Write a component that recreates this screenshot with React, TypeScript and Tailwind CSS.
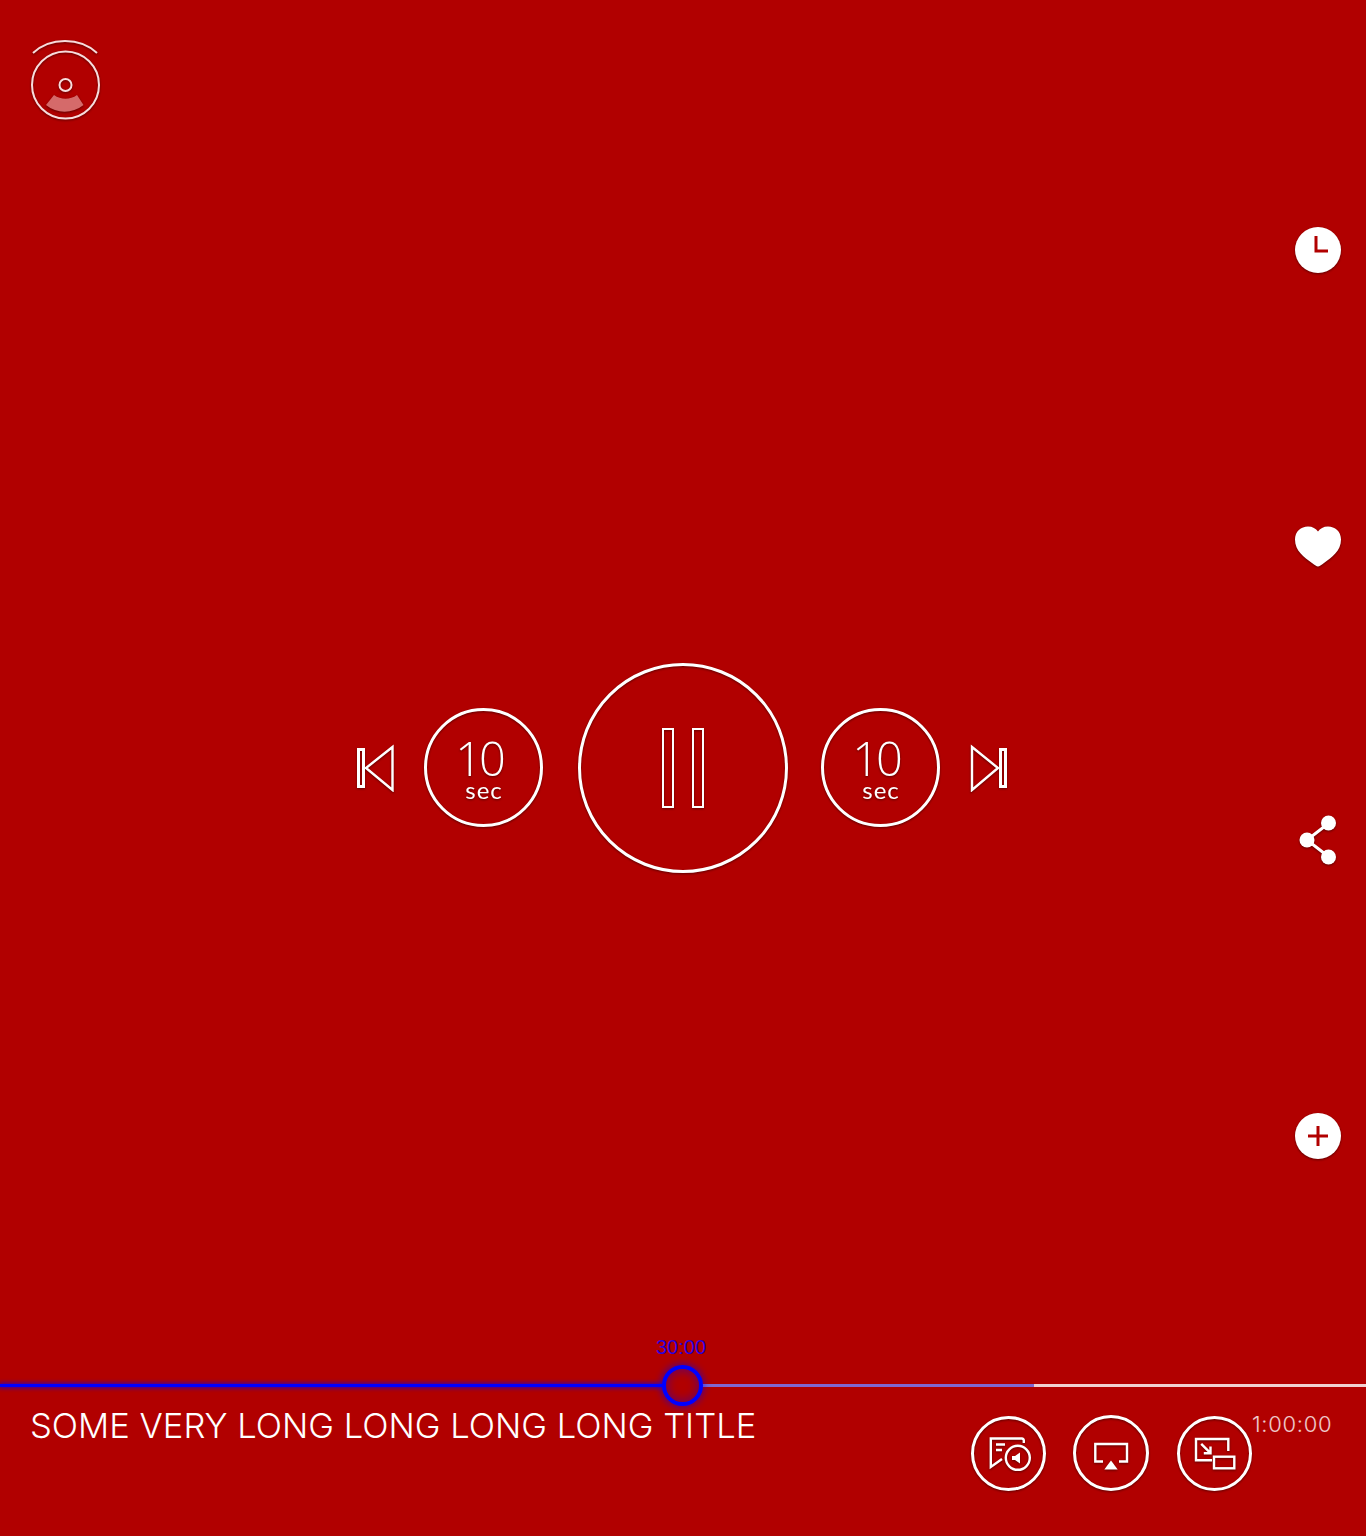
import React from 'react';

const shadow = 'drop-shadow-[0_1px_1px_rgba(0,0,0,0.45)]';

const SideButton: React.FC<{ children: React.ReactNode; className?: string }> = ({ children, className = '' }) => (
  <button className={`w-[46px] h-[46px] flex items-center justify-center ${shadow} ${className}`}>{children}</button>
);

const SkipBack = () => (
  <svg width="38" height="48" viewBox="0 0 38 48" fill="none" stroke="white" className={shadow}>
    <rect x="2.5" y="5.5" width="5" height="37" strokeWidth="3" />
    <path d="M36.5 3 L10 24 L36.5 46 Z" strokeWidth="2.4" />
  </svg>
);

const SkipForward = () => (
  <svg width="38" height="48" viewBox="0 0 38 48" fill="none" stroke="white" className={shadow}>
    <rect x="30.5" y="5.5" width="5" height="37" strokeWidth="3" />
    <path d="M2 3 L28 24 L2 46 Z" strokeWidth="2.4" />
  </svg>
);

const TenSec = () => (
  <button className={`w-[119px] h-[119px] -mt-[1px] rounded-full border-[3px] border-white text-white flex flex-col items-center ${shadow}`}>
    <span className="text-[47px] leading-[36px] font-light mt-[29px] -ml-[9px] tracking-[-3px]" style={{ fontFamily: '"Open Sans", sans-serif' }}>10</span>
    <span className="text-[24px] leading-[20px] mt-[4px] ml-[1px] tracking-[1px]" style={{ fontFamily: 'Lato, sans-serif' }}>sec</span>
  </button>
);

const BottomButton: React.FC<{ children: React.ReactNode; className?: string }> = ({ children, className = '' }) => (
  <button className={`rounded-full border-[3px] border-white flex items-center justify-center ${shadow} ${className}`}>{children}</button>
);

export default function App() {
  return (
    <div className="h-[1536px] bg-[#b10000] flex flex-col overflow-hidden" style={{ fontFamily: '"Liberation Sans", sans-serif' }}>
      <div className="h-[1384px] grid grid-cols-[1fr_auto_1fr]">
        <div className="pt-[39px] pl-[30px]">
          <svg width="72" height="82" viewBox="0 0 72 82" fill="none" className={shadow}>
            <path d="M3 14 C20 -2 50 -2 67 14" stroke="#f7dcdc" strokeWidth="2" />
            <circle cx="35.5" cy="46" r="33.5" stroke="#f7dcdc" strokeWidth="2" />
            <circle cx="35.5" cy="46" r="6" stroke="#f7dcdc" strokeWidth="2" />
            <path d="M16 66 L24 56 C31 61 40 61 47 56 L53.5 66 C42 75 27 75 16 66 Z" fill="#d56a6a" />
          </svg>
        </div>

        <div className="pt-[663px] pr-[2px] flex items-center h-[873px]">
          <div className="flex items-center gap-[30px] mr-[35px]">
            <SkipBack />
            <TenSec />
          </div>
          <button className={`w-[210px] h-[210px] rounded-full border-[3px] border-white flex items-center justify-center gap-[18px] ${shadow}`}>
            <span className="w-[12px] h-[80px] border-2 border-white" />
            <span className="w-[12px] h-[80px] border-2 border-white" />
          </button>
          <div className="flex items-center gap-[30px] ml-[33px]">
            <TenSec />
            <SkipForward />
          </div>
        </div>

        <div className="flex flex-col items-end pt-[227px] pr-[25px] gap-[249px]">
          <SideButton>
            <svg width="46" height="46" viewBox="0 0 46 46">
              <circle cx="23" cy="23" r="23" fill="white" />
              <path d="M21 9 V24 H33" fill="none" stroke="#b10000" strokeWidth="3" />
            </svg>
          </SideButton>
          <SideButton className="pt-[2px]">
            <svg width="46" height="41" viewBox="0 0 46 41">
              <path d="M23 40.5 C21.5 40.5 20 39 17 37 C9 31 0 25 0 13.5 C0 5.5 6 0.5 13 0.5 C17.5 0.5 21 2.5 23 5.5 C25 2.5 28.5 0.5 33 0.5 C40 0.5 46 5.5 46 13.5 C46 25 37 31 29 37 C26 39 24.5 40.5 23 40.5 Z" fill="white" />
            </svg>
          </SideButton>
          <SideButton>
            <svg width="40" height="50" viewBox="0 0 40 50">
              <path d="M31 8 L9 25 L31 42" fill="none" stroke="white" strokeWidth="3" />
              <circle cx="30.5" cy="8" r="7.5" fill="white" />
              <circle cx="9" cy="25" r="7.5" fill="white" />
              <circle cx="30.5" cy="42" r="7.5" fill="white" />
            </svg>
          </SideButton>
          <SideButton className="mt-[1px]">
            <svg width="46" height="46" viewBox="0 0 46 46">
              <circle cx="23" cy="23" r="23" fill="white" />
              <path d="M13 23 H33 M23 13 V33" fill="none" stroke="#b10000" strokeWidth="3" />
            </svg>
          </SideButton>
        </div>
      </div>

      {/* progress */}
      <div className="relative h-[3px] flex-none flex">
        <div className="w-[682px] bg-[#0000ff] shadow-[0_0_4px_1px_rgba(0,0,255,0.7)]" />
        <div className="w-[352px] bg-[#8068d0]" />
        <div className="flex-1 bg-[#f0d0d0]" />
        <div className="absolute left-[662px] top-[-19px] w-[41px] h-[41px] rounded-full bg-[#b10000] border-[4px] border-[#0000ff] shadow-[0_0_6px_2px_rgba(0,0,255,0.45),inset_0_0_8px_2px_rgba(0,0,255,0.35)]" />
        <div className="absolute left-[631px] top-[-49px] w-[100px] text-center text-[20px] leading-[24px] text-[#2a00dd]">30:00</div>
      </div>

      <div className="flex-1 flex items-start pl-[30px]">
        <div className="flex-1 pt-[16px] text-white text-[34.6px] leading-[44px]" style={{ fontFamily: 'Inter, sans-serif', fontWeight: 300 }}>
          SOME VERY LONG LONG LONG LONG TITLE
        </div>
        <div className="flex items-center pt-[28px]">
          <BottomButton className="w-[75px] h-[75px] mr-[27px]">
            <svg width="44" height="38" viewBox="0 0 44 38" fill="none" stroke="white" strokeWidth="2.4">
              <path d="M36.8 9 V6.5 Q36.8 4.5 34.8 4.5 H3.8 V33 L15 25" />
              <path d="M9 10.5 H18 M9 16 H15" />
              <circle cx="30.8" cy="23.8" r="12" />
              <path d="M33 18.5 V29.5 L28 26 H25 V22 H28 Z" fill="white" stroke="none" />
            </svg>
          </BottomButton>
          <BottomButton className="w-[76px] h-[76px] mr-[28px]">
            <svg width="38" height="34" viewBox="0 0 38 34" fill="none" stroke="white" strokeWidth="2.4">
              <path d="M11 25.5 H3.3 V8 H35 V25.5 H27" />
              <path d="M19 24.5 L25.7 33.5 H12.3 Z" fill="white" stroke="none" />
            </svg>
          </BottomButton>
          <BottomButton className="w-[75px] h-[75px]">
            <svg width="44" height="36" viewBox="0 0 44 36" fill="none" stroke="white" strokeWidth="2.4">
              <path d="M19 25.3 H3 V4 H35.3 V16" />
              <rect x="21" y="21.7" width="20.3" height="11.6" />
              <path d="M8.2 8.8 L17.5 18.2 M17.5 11.5 V18.2 H10.8" />
            </svg>
          </BottomButton>
        </div>
        <div className="w-[114px] pr-[38px] pt-[24px] text-right text-[22px] leading-[26px] tracking-[0.7px] text-white/80 whitespace-nowrap" style={{ fontFamily: 'Inter, sans-serif', fontWeight: 300 }}>1:00:00</div>
      </div>
    </div>
  );
}
